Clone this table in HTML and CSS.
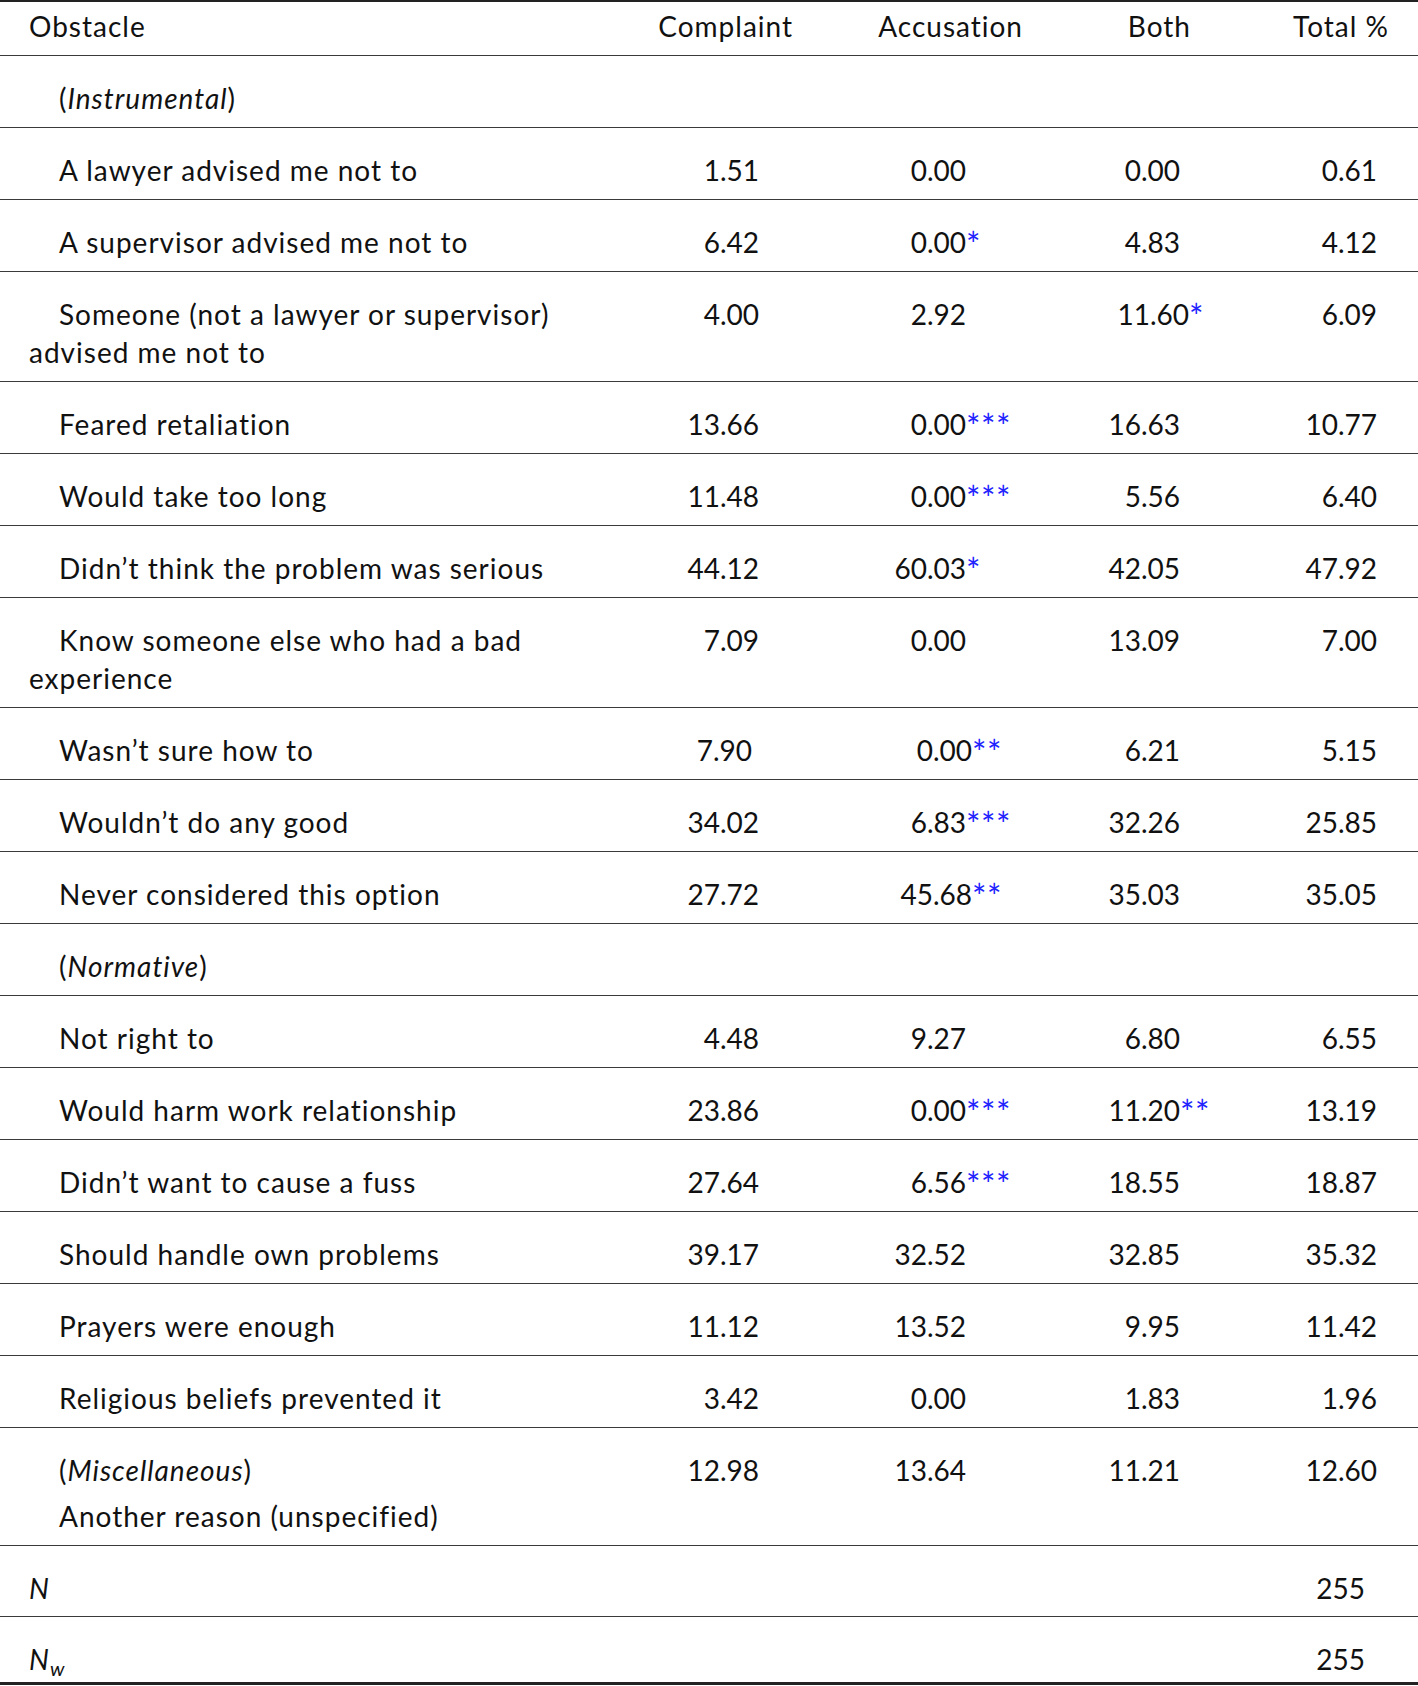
FILE: index.html
```html
<!DOCTYPE html>
<html lang="en">
<head>
<meta charset="utf-8">
<title>Obstacles</title>
<link rel="stylesheet" href="styles.css">
</head>
<body>
<table class="tbl">
  <colgroup>
    <col class="w1"><col class="w2"><col class="w3"><col class="w4"><col class="w5">
  </colgroup>
  <thead>
    <tr>
      <th class="lab">Obstacle</th>
      <th class="h2">Complaint</th>
      <th class="h3">Accusation</th>
      <th class="h4">Both</th>
      <th class="h5">Total %</th>
    </tr>
  </thead>
  <tbody>
    <tr><td class="lab ind">(<i>Instrumental</i>)</td><td></td><td></td><td></td><td></td></tr>
    <tr><td class="lab ind">A lawyer advised me not to</td><td class="n2">1.51</td><td class="n3">0.00</td><td class="n4">0.00</td><td class="n5">0.61</td></tr>
    <tr><td class="lab ind">A supervisor advised me not to</td><td class="n2">6.42</td><td class="n3">0.00<span class="sig">*</span></td><td class="n4">4.83</td><td class="n5">4.12</td></tr>
    <tr><td class="lab ind">Someone (not a lawyer or supervisor)<br>advised me not to</td><td class="n2">4.00</td><td class="n3">2.92</td><td class="n4 sh">11.60<span class="sig">*</span></td><td class="n5">6.09</td></tr>
    <tr><td class="lab ind">Feared retaliation</td><td class="n2">13.66</td><td class="n3">0.00<span class="sig">***</span></td><td class="n4">16.63</td><td class="n5">10.77</td></tr>
    <tr><td class="lab ind">Would take too long</td><td class="n2">11.48</td><td class="n3">0.00<span class="sig">***</span></td><td class="n4">5.56</td><td class="n5">6.40</td></tr>
    <tr><td class="lab ind">Didn’t think the problem was serious</td><td class="n2">44.12</td><td class="n3">60.03<span class="sig">*</span></td><td class="n4">42.05</td><td class="n5">47.92</td></tr>
    <tr><td class="lab ind">Know someone else who had a bad<br>experience</td><td class="n2">7.09</td><td class="n3">0.00</td><td class="n4">13.09</td><td class="n5">7.00</td></tr>
    <tr><td class="lab ind">Wasn’t sure how to</td><td class="n2 shl">7.90</td><td class="n3 sh">0.00<span class="sig">**</span></td><td class="n4">6.21</td><td class="n5">5.15</td></tr>
    <tr><td class="lab ind">Wouldn’t do any good</td><td class="n2">34.02</td><td class="n3">6.83<span class="sig">***</span></td><td class="n4">32.26</td><td class="n5">25.85</td></tr>
    <tr><td class="lab ind">Never considered this option</td><td class="n2">27.72</td><td class="n3 sh">45.68<span class="sig">**</span></td><td class="n4">35.03</td><td class="n5">35.05</td></tr>
    <tr><td class="lab ind">(<i>Normative</i>)</td><td></td><td></td><td></td><td></td></tr>
    <tr><td class="lab ind">Not right to</td><td class="n2">4.48</td><td class="n3">9.27</td><td class="n4">6.80</td><td class="n5">6.55</td></tr>
    <tr><td class="lab ind">Would harm work relationship</td><td class="n2">23.86</td><td class="n3">0.00<span class="sig">***</span></td><td class="n4">11.20<span class="sig">**</span></td><td class="n5">13.19</td></tr>
    <tr><td class="lab ind">Didn’t want to cause a fuss</td><td class="n2">27.64</td><td class="n3">6.56<span class="sig">***</span></td><td class="n4">18.55</td><td class="n5">18.87</td></tr>
    <tr><td class="lab ind">Should handle own problems</td><td class="n2">39.17</td><td class="n3">32.52</td><td class="n4">32.85</td><td class="n5">35.32</td></tr>
    <tr><td class="lab ind">Prayers were enough</td><td class="n2">11.12</td><td class="n3">13.52</td><td class="n4">9.95</td><td class="n5">11.42</td></tr>
    <tr><td class="lab ind">Religious beliefs prevented it</td><td class="n2">3.42</td><td class="n3">0.00</td><td class="n4">1.83</td><td class="n5">1.96</td></tr>
    <tr class="misc"><td class="lab ind"><div>(<i>Miscellaneous</i>)</div><div class="second">Another reason (unspecified)</div></td><td class="n2">12.98</td><td class="n3">13.64</td><td class="n4">11.21</td><td class="n5">12.60</td></tr>
    <tr class="nrow"><td class="lab"><i>N</i></td><td></td><td></td><td></td><td class="nn">255</td></tr>
    <tr class="last"><td class="lab"><i>N</i><sub><i>w</i></sub></td><td></td><td></td><td></td><td class="nn">255</td></tr>
  </tbody>
</table>
</body>
</html>
```
FILE: styles.css
```css
html, body {
  margin: 0;
  padding: 0;
  background: #ffffff;
}

body {
  font-family: "Lato", "Liberation Sans", sans-serif;
  font-size: 28px;
  line-height: 38px;
  color: #111111;
}

.tbl {
  width: 1418px;
  table-layout: fixed;
  border-collapse: separate;
  border-spacing: 0;
  border-top: 2px solid #222222;
}

.w1 { width: 600px; }
.w2 { width: 220px; }
.w3 { width: 220px; }
.w4 { width: 190px; }
.w5 { width: 188px; }

th, td {
  vertical-align: top;
  border-bottom: 1px solid #3a3a3a;
  padding: 23px 0 10px 0;
  font-weight: normal;
  white-space: nowrap;
}

th {
  padding-top: 5px;
  padding-bottom: 10px;
  letter-spacing: 1px;
}

.lab {
  text-align: left;
  padding-left: 29px;
  letter-spacing: 1px;
}

.ind {
  text-indent: 30px;
}

.h2 { text-align: right; padding-right: 27px; }
.h3 { text-align: right; padding-right: 17px; }
.h4 { text-align: right; padding-right: 39px; }
.h5 { text-align: right; padding-right: 29px; }

.n2 { text-align: right; padding-right: 61px; }
.n3 { text-align: right; padding-right: 74px; }
.n4 { text-align: right; padding-right: 50px; }
.n5 { text-align: right; padding-right: 41px; }
.nn { text-align: right; padding-right: 53px; }

.n2.shl { padding-right: 68px; }
.n3.sh { padding-right: 68px; }
.n4.sh { padding-right: 41px; }

.sig {
  display: inline-block;
  width: 0;
  color: #2222ff;
  white-space: nowrap;
  text-align: left;
  font-size: 34px;
  line-height: 0;
  vertical-align: -4px;
  letter-spacing: 0.5px;
}

.misc .second {
  margin-top: 8px;
}

.misc td {
  padding-bottom: 10px;
}

.nrow td {
  padding-bottom: 9px;
}

.last td {
  border-bottom: 3px solid #222222;
  padding-bottom: 4px;
}

sub {
  font-size: 20px;
  line-height: 0;
  vertical-align: -6px;
}
```
